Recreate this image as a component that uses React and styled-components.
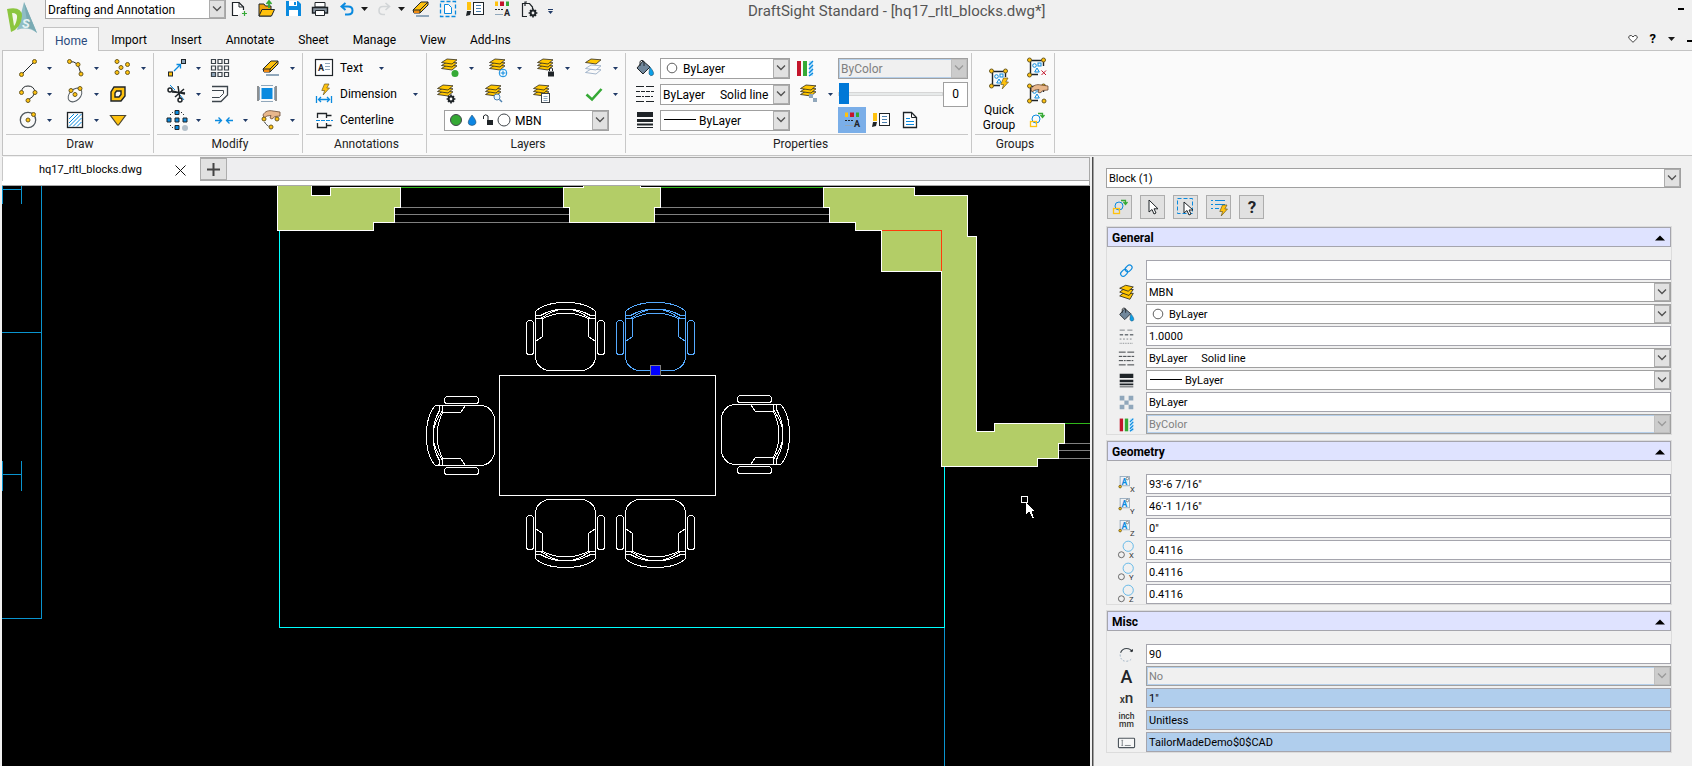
import React from 'react'
import styled, { createGlobalStyle } from 'styled-components'

const INK = '#1f2428'
const GOLD = '#ffc20e'
const BLUE = '#0a8adf'
const GREEN = '#35a935'
const RED = '#c3152b'
const SLATE = '#90a7bb'

const Dot = ({ x, y, r = 2 }) => (
  <circle cx={x} cy={y} r={r} fill={GOLD} stroke="#6b5a22" strokeWidth="1" />
)

const Bolt = ({ x, y }) => (
  <path
    transform={`translate(${x} ${y})`}
    d="M3.5 0H8L5.8 4H8.5L2.2 11L3.6 6.5H0.8Z"
    fill={GOLD}
    stroke="#6b5a22"
    strokeWidth=".7"
  />
)

const Slab = ({ y, fill = '#ffc600', stroke = '#2d2a20' }) => (
  <path d={`M1.5 ${y + 3.5}L7 ${y}L17 ${y + .8}L12 ${y + 5}Z`} fill={fill} stroke={stroke} strokeWidth=".8" />
)

const Slabs = () => (
  <>
    <Slab y={7} />
    <Slab y={4} />
    <Slab y={1} />
  </>
)

const Gear = ({ x, y }) => (
  <g transform={`translate(${x} ${y})`} stroke={INK} fill="none">
    <circle r="2.4" strokeWidth="2" />
    <path d="M0-4.4V-3M0 3V4.4M-4.4 0H-3M3 0H4.4M-3-3L-2-2M2 2L3 3M-3 3L-2 2M2-2L3-3" strokeWidth="1.6" />
  </g>
)

const Hand = ({ x, y }) => (
  <path
    transform={`translate(${x} ${y})`}
    d="M0 5C2 1 6 0 10 1L17 2V6L12 6.5L9 9L7 8L8 5.5L4 6L1 8Z"
    fill="#e8b78c"
    stroke="#6b4a33"
    strokeWidth=".8"
  />
)

const Page = ({ x, y, w, h }) => (
  <g transform={`translate(${x} ${y})`} fill="none">
    <rect x=".5" y=".5" width={w - 1} height={h - 1} fill="#fff" stroke="#3c444b" />
    <path d={`M2.5 3.5H${w - 2.5}M2.5 5.5H${w - 2.5}M2.5 7.5H${w - 2.5}`} stroke={SLATE} />
  </g>
)

const GroupFrame = () => (
  <g fill="none">
    <path d="M3.5 2.5H16.5V8M3.5 2.5V16.5H11" stroke={INK} strokeWidth="1.4" />
    <circle cx="7.5" cy="7.5" r="1.8" stroke={BLUE} />
    <rect x="11" y="5" width="3" height="3" stroke={BLUE} />
    <path d="M10 10L12.3 14H7.7Z" stroke={BLUE} />
    <Dot x={2.5} y={2} />
    <Dot x={16.5} y={2} />
    <Dot x={2.5} y={17} />
  </g>
)

const TagA = ({ axis }) => (
  <g>
    <rect x="2.5" y=".5" width="11" height="11" fill="#eef3f7" stroke={SLATE} />
    <text x="4" y="10" fontSize="10" fontWeight="700" fill={BLUE}>A</text>
    <circle cx="11" cy="3" r="1.5" fill="#fff" stroke="#555" strokeWidth=".8" />
    <Dot x={2.5} y={12.5} r={1.5} />
    <text x="14" y="19" fontSize="9" fill="#333">{axis}</text>
  </g>
)

const ScaleAxis = ({ axis }) => (
  <g fill="none">
    <circle cx="12" cy="5" r="6" stroke="#4fb0e6" />
    <circle cx="4" cy="15" r="3.5" stroke="#555" />
    <text x="13" y="19" fontSize="9" fill="#333">{axis}</text>
  </g>
)

const Attributes = () => (
  <g>
    <path d="M3 2.5H6V7H3Z" fill={GOLD} />
    <path d="M8 2.5H12V7H8Z" fill={RED} />
    <path d="M14 2.5H17V7H14Z" fill={GREEN} />
    <path d="M3 10.5H11" stroke={INK} strokeWidth="1" strokeDasharray="2 1" />
    <path d="M3 15.5H11" stroke={SLATE} />
    <text x="12" y="17" fontSize="9" fontWeight="700" fill={INK}>A</text>
  </g>
)

const ReplaceShape = () => (
  <g fill="none">
    <circle cx="9" cy="9" r="4" stroke={BLUE} />
    <rect x="3.5" y="11.5" width="6" height="5" stroke={GOLD} strokeWidth="1.3" />
    <path d="M11 3.5H15.5V6M13.5 5L15.5 7.5L17.5 5" stroke={GREEN} strokeWidth="1.3" />
  </g>
)

const Brush = () => (
  <g>
    <path d="M2 3H6V11H2Z" fill={GOLD} />
    <path d="M2 12H6L5 16L1 17Z" fill={INK} />
    <rect x="8.5" y="3.5" width="10" height="12" fill="#fff" stroke={INK} />
    <path d="M11 6.5H16M11 9.5H16M11 12.5H16" stroke="#4a7fae" />
  </g>
)

const Eraser = () => (
  <g>
    <path d="M5 17H18" stroke={SLATE} strokeWidth="2" />
    <path d="M2 11L10 3H17V6L9 14H3Z" fill={GOLD} stroke={INK} />
    <path d="M3 14V11.5H8.5V14Z" fill="#f08a12" />
    <path d="M2 11H9L17 3M9 11V14" fill="none" stroke={INK} />
  </g>
)

const Bucket = () => (
  <g>
    <path d="M8 3L15 9L8 16L2 10Z" fill="#71879b" stroke={INK} />
    <path d="M5 8V3.5Q7 1 9 3.5V8" fill="none" stroke={INK} />
    <path d="M15 9Q20 15 18 17Q15.500 19 14 16Q14 13 15 9Z" fill="#0aa0e8" stroke="#26506c" strokeWidth=".6" />
  </g>
)

const ColorBars = () => (
  <g>
    <path d="M2 3H6V18H2Z" fill={RED} />
    <path d="M8 3H12V18H8Z" fill={GREEN} />
    <path d="M14 3H18V18H14Z" fill="#bfe4fb" />
    <path d="M14 7L18 3M14 11L18 7M14 15L18 11M14 18L18 15" stroke={BLUE} strokeWidth="1.4" />
  </g>
)

const Weights = () => (
  <path d="M2 2H18V7H2ZM2 9H18V12H2ZM2 13.5H18V15.5H2ZM2 17H18V18H2Z" fill={INK} />
)

const drawings = {
  line: <><path d="M4 16L16 4" stroke={INK} /><Dot x={3.5} y={16.5} /><Dot x={16.5} y={3.5} /></>,
  polyline: <><path d="M4 3.5Q9 3 13 6.5L16 16" fill="none" stroke={INK} /><Dot x={4.5} y={3.5} /><Dot x={13} y={6.5} /><Dot x={16} y={16} /></>,
  points: <><Dot x={5} y={3.5} /><Dot x={15.5} y={6.5} /><Dot x={9} y={9.5} /><Dot x={5} y={14.5} /><Dot x={15.5} y={14.5} /></>,
  arc: <><path d="M3.5 8Q4 2 10 2T17 8Q16 13 10 16" fill="none" stroke={INK} /><Dot x={3.5} y={8.5} /><Dot x={17} y={8.5} /><Dot x={10} y={16.5} /></>,
  ellipse: <><ellipse cx="10" cy="11" rx="8" ry="5.5" transform="rotate(-45 10 11)" fill="none" stroke="#50585e" /><Dot x={10} y={10.5} /><Dot x={15} y={4.5} /><Dot x={6} y={6.5} /></>,
  region: <><path d="M6 3H17V12L13 17H3V8Z" fill={GOLD} stroke={INK} strokeWidth="1.4" /><path d="M8.5 7H13V10.5L11 13H7V9Z" fill="#fafafa" stroke={INK} strokeWidth="1.4" /></>,
  circle: <><circle cx="10" cy="10" r="7.7" fill="none" stroke="#50585e" strokeWidth="1.3" /><Dot x={10} y={10} /><Dot x={15.5} y={4.5} /></>,
  hatch: <><rect x="2.5" y="2.5" width="15" height="15" fill="#fff" stroke={INK} strokeWidth="1.3" /><path d="M4 9L9 4M4 13L13 4M4 16.5L16.5 4M8 16.5L16.5 8M12 16.5L16.5 12" stroke={BLUE} /></>,
  triangle: <path d="M2.5 5.5H17.5L10.5 15H9.5Z" fill={GOLD} stroke="#4d4630" strokeWidth="1.2" />,
  move: <><rect x="1.5" y="14" width="4" height="4" fill={GOLD} stroke={INK} /><rect x="14.5" y="1.5" width="4" height="4" fill={SLATE} stroke={INK} /><path d="M7 13L13 7M9.5 6.5H13.5V10.5" fill="none" stroke={BLUE} strokeWidth="1.3" /></>,
  pattern: (
    <g fill="none" stroke="#3c444b" strokeWidth="1.2">
      <path d="M1.5 1.5H5.5V5.5H1.5ZM8 1.5H12V5.5H8ZM14.5 1.5H18.5V5.5H14.5ZM1.5 8H5.5V12H1.5ZM8 8H12V12H8ZM14.5 8H18.5V12H14.5ZM8 14.5H12V18.5H8ZM14.5 14.5H18.5V18.5H14.5Z" />
      <path d="M1.5 14.5H5.5V18.5H1.5Z" fill={SLATE} />
    </g>
  ),
  eraser: <Eraser />,
  trim: (
    <g fill="none" stroke={INK} strokeWidth="1.5">
      <path d="M3 1L8 6M13 11L17 16" stroke={BLUE} strokeWidth="1" />
      <path d="M5 7L18 10M5 8L18 9M11 2L13 15M17 5L8 13" />
      <circle cx="3" cy="6" r="2" /><circle cx="13" cy="16" r="2" />
    </g>
  ),
  offset: <g fill="none" stroke="#3c444b"><path d="M2 2.5H17.5V11L11 17.5H2" strokeWidth="1.3" /><path d="M2 6.5H13.5V9.5L9.5 13.5H2" /></g>,
  stretch: <><rect x="4.5" y="4" width="11" height="11" fill={BLUE} /><path d="M4 1.5H16M4 17.5H16M2.5 3V16M17.5 3V16" stroke={SLATE} /><path d="M1 2V17M19 2V17" stroke={INK} /></>,
  ring: (
    <g stroke={INK}>
      <path d="M3 5L6 2M14 2L17 5M3 15L6 18" strokeDasharray="1.5 1.5" />
      <path d="M8 .5H12V4.5H8ZM0 8H4V12H0ZM8 8H12V12H8ZM16 8H20V12H16ZM8 15.5H12V19.5H8Z" fill={BLUE} />
      <circle cx="18" cy="18" r="3" fill="#b4c0ca" stroke="none" />
    </g>
  ),
  join: <path d="M1 10.5H7M4.5 7.5L7.5 10.5L4.5 13.5M19 10.5H13M15.5 7.5L12.5 10.5L15.5 13.5" fill="none" stroke={BLUE} strokeWidth="1.3" />,
  editPoly: <><path d="M3 9Q3 14 9 17" stroke={INK} fill="none" strokeDasharray="2 1" /><Hand x={2} y={0} /><Dot x={3} y={9} /><Dot x={16} y={9} /><Dot x={10} y={17} /></>,
  note: <><rect x="1.5" y="1.5" width="17" height="16" fill="#fff" stroke={INK} strokeWidth="1.2" /><text x="4" y="13" fontSize="9" fontWeight="700" fill={INK}>A</text><path d="M11 5.5H16M11 8.5H16M11 11.5H16" stroke={SLATE} /></>,
  dimension: <><Bolt x={7} y={0} /><path d="M2.5 12V19M17.5 12V19M4.5 15.5H15.5M7 13L4.5 15.5L7 18M13 13L15.5 15.5L13 18" fill="none" stroke={BLUE} strokeWidth="1.3" /></>,
  centerline: <><path d="M3.5 8V3.5H12.5V8M12.5 5.5H17.5M3.5 13V17.5H12.5V13M12.5 15.5H17.5" fill="none" stroke={INK} strokeWidth="1.3" /><path d="M2 10.5H19" stroke={BLUE} strokeDasharray="4 1" /></>,
  layerOn: <><Slabs /><circle cx="15" cy="15.5" r="3.5" fill={GREEN} /></>,
  layerNew: <><Slabs /><circle cx="15" cy="15" r="3.8" fill="#fff" stroke={BLUE} /><path d="M15 12.5V17.5M12.5 15H17.5" stroke={BLUE} /></>,
  layerLock: <><Slabs /><path d="M12 13.5H18V18.5H12Z" fill={INK} /><path d="M13.5 13V10.5Q15 9 16.5 10.5V13" fill="none" stroke={INK} /></>,
  layerPrev: <><Slab y={11} fill="#fafafa" stroke="#8fa6c0" /><Slab y={7} fill="#fafafa" stroke="#8fa6c0" /><Slab y={1} /></>,
  layerGear: <><Slabs /><Gear x={15} y={15} /></>,
  layerFind: <><Slabs /><circle cx="13" cy="13" r="3" fill="#e8f5fd" stroke="#4a7fae" /><path d="M15.5 15.5L18 18" stroke="#4a7fae" strokeWidth="1.4" /></>,
  layerList: <><Slabs /><Page x={9} y={9} w={9} h={10} /></>,
  check: <path d="M2.5 10.5L8 15.5L17.5 5" fill="none" stroke={GREEN} strokeWidth="2.6" />,
  layers: <g stroke="#2d2a20" fill="#ffc600"><path d="M2 14L6 11H18L14 18Z" /><path d="M2 9.5L6 6.5H18L13 13.5Z" /><path d="M2 5L9 1.5L18 3.5L12 8.5Z" /></g>,
  layerAlpha: <><Slabs /><path d="M10 10H14V14H10ZM14 14H18V18H14Z" fill={SLATE} /></>,
  bucket: <Bucket />,
  styles: <g fill="none" stroke={INK}><path d="M1 2.5H9M11 2.5H19M1 17.5H9M11 17.5H19" /><path d="M1 7.5H19" strokeDasharray="4 1" /><path d="M1 12.5H19" strokeDasharray="5 1 2 1" /></g>,
  weights: <Weights />,
  bars: <ColorBars />,
  attributes: <Attributes />,
  brush: <Brush />,
  page: <><path d="M3.5 2.5H11.5L16.5 7.5V17.5H3.5Z" fill="#fff" stroke={INK} strokeWidth="1.3" /><path d="M11.5 2.5V7.5H16.5" fill="none" stroke={INK} /><path d="M6 8.5H10M6 11.5H14M6 14.5H14" stroke={BLUE} /></>,
  quickGroup: <><GroupFrame /><Bolt x={11} y={9} /></>,
  ungroup: <><GroupFrame /><path d="M14.5 12.5L19 17M19 12.5L14.5 17" stroke={RED} /></>,
  editGroup: <><GroupFrame /><Hand x={4} y={0} /><Dot x={17} y={17} /></>,
  replace: <ReplaceShape />,
  newFile: <><path d="M9 16.5H3.5V3.5H10L14.5 8V11" fill="#fff" stroke={INK} strokeWidth="1.2" /><path d="M10 3.5V8H14.5" fill="none" stroke={INK} /><path d="M15.5 12V17M13 14.5H18" stroke={GREEN} strokeWidth="1.2" /></>,
  open: <><path d="M3 5H8L9.5 7H15V17H3Z" fill="#f0a30a" stroke={INK} /><path d="M3 17L6 10.5H18.5L15.5 17Z" fill={GOLD} stroke={INK} /><path d="M13 9V3M10.5 5L13 2L15.5 5" stroke={GREEN} strokeWidth="1.8" fill="none" /></>,
  save: <><path d="M3 2H15L18 5V17H3Z" fill={BLUE} /><path d="M6 2H14V7H6ZM6 11H15V17H6Z" fill="#fff" /><path d="M11 3H13V6H11Z" fill={BLUE} /></>,
  print: <><path d="M5 3.5H15V8H5Z" fill="#fff" stroke={INK} /><path d="M2.5 8.5H17.5V14H2.5Z" fill="#8b97a2" stroke={INK} strokeWidth="1.4" /><path d="M5.5 11.5H14.5V16.5H5.5Z" fill="#fff" stroke={INK} /></>,
  undo: <path d="M8.5 4L4.5 7.5L8.5 11M5 7.5H11Q15.5 7.5 15.5 11.5T11 15.5H8" fill="none" stroke={BLUE} strokeWidth="2" />,
  redo: <path d="M11.5 4L15.5 7.5L11.5 11M15 7.5H9Q5 7.5 5 11.5T9 15.5H11" fill="none" stroke="#d2d5d7" strokeWidth="1.6" />,
  pickPage: <><rect x="2.5" y="2.5" width="15" height="15" fill="none" stroke={BLUE} strokeWidth="1.3" strokeDasharray="4 2" /><path d="M6.5 5.5H10.5L13.5 8.5V14.5H6.5Z" fill="#fff" stroke={BLUE} /></>,
  pageGear: <><path d="M8 17.5H3.5V4.5H10.5L13.5 8V10M6 7V3H8" fill="none" stroke={INK} strokeWidth="1.2" /><Gear x={14} y={14} /></>,
  link: <g fill="none" stroke={BLUE} strokeWidth="1.3" transform="rotate(-45 10 10)"><rect x="1.5" y="7" width="9" height="6" rx="3" /><rect x="9" y="7" width="9" height="6" rx="3" /></g>,
  scaleLines: <g stroke="#70767b"><path d="M2 2.5H18" strokeDasharray="6 3" /><path d="M2 8H18" strokeDasharray="4 2" strokeWidth="1.6" /><path d="M2 13H18" strokeDasharray="2 2" /><path d="M2 18H18" strokeDasharray="1 1" /></g>,
  checker: <path d="M2 2H7.5V7.5H2ZM12.5 2H18V7.5H12.5ZM7.5 7.5H12.5V12.5H7.5ZM2 12.5H7.5V18H2ZM12.5 12.5H18V18H12.5Z" fill={SLATE} />,
  rotate: <g fill="none"><path d="M3 8Q5 3 10 3T16.5 7" stroke="#3c444b" strokeWidth="1.3" /><path d="M13.5 6.5H17.5V3.5Z" fill={INK} /><path d="M2.5 10Q3 18 10 18Q14 17.5 16 15" stroke={SLATE} strokeDasharray="2 2" /></g>,
  letterA: <text x="10" y="18" fontSize="21" fontWeight="500" textAnchor="middle" fill={INK}>A</text>,
  xn: <text x="10" y="15" fontWeight="500" textAnchor="middle" fill="#333"><tspan fontSize="12">x</tspan><tspan fontSize="18">n</tspan></text>,
  units: <><text x="10" y="8" fontSize="10" fontWeight="500" textAnchor="middle" fill="#333">inch</text><text x="10" y="18" fontSize="10" fontWeight="500" textAnchor="middle" fill="#333">mm</text></>,
  nameBox: <><rect x=".5" y="5" width="19" height="11" rx="1" fill="#f7f7f7" stroke="#4c545b" strokeWidth="1.3" /><path d="M5 8V13M4 7.5H6M4 13.5H6M8 13.5H15" stroke="#70767b" /></>,
  pointer: <path d="M6 3V15L9 12.5L11 17L13 16L11 11.8H15Z" fill="#fff" stroke={INK} />,
  pointerBox: <><rect x="1.5" y="1.5" width="15" height="15" fill="none" stroke={BLUE} strokeDasharray="4 2" /><path d="M8 5V16L11 13.5L13 18L15 17L13 13H17Z" fill="#fff" stroke={INK} /></>,
  quickList: <><path d="M2 3.5H4M6 3.5H16M2 7.5H4M6 7.5H16M2 11.5H4M6 11.5H10" stroke={BLUE} strokeWidth="1.2" /><Bolt x={10} y={8} /></>,
  help: <text x="10" y="16" fontSize="17" fontWeight="700" textAnchor="middle" fill={INK}>?</text>,
  posX: <TagA axis="X" />,
  posY: <TagA axis="Y" />,
  posZ: <TagA axis="Z" />,
  scaleX: <ScaleAxis axis="X" />,
  scaleY: <ScaleAxis axis="Y" />,
  scaleZ: <ScaleAxis axis="Z" />,
}

const Icon = ({ name }) => (
  <IconSvg viewBox="0 0 20 20" aria-hidden="true">{drawings[name]}</IconSvg>
)

const Caret = ({ dark }) => (
  <CaretSvg viewBox="0 0 7 4" aria-hidden="true" $dark={dark}>
    <path d="M0 0H7L3.5 4Z" fill={dark ? '#1a1a1a' : '#203a66'} />
  </CaretSvg>
)

const Tool = ({ icon, menu }) => (
  <ToolButton type="button" aria-label={icon}>
    <ToolFace $menu={menu}><Icon name={icon} /></ToolFace>
    {menu && <Caret />}
  </ToolButton>
)

const Chevron = ({ disabled }) => (
  <ComboArrow $disabled={disabled}>
    <svg width="10" height="6" viewBox="0 0 10 6" aria-hidden="true">
      <path d="M1 .5L5 4.5L9 .5" fill="none" stroke={disabled ? '#9a9a9a' : '#505050'} strokeWidth="1.3" />
    </svg>
  </ComboArrow>
)

const Combo = ({ label, value, lead, disabled, small }) => (
  <ComboBox $disabled={disabled} $small={small}>
    {lead}
    <ComboSelect aria-label={label} disabled={disabled} defaultValue={value}>
      <option>{value}</option>
    </ComboSelect>
    <Chevron disabled={disabled} />
  </ComboBox>
)

const tabs = ['Home', 'Import', 'Insert', 'Annotate', 'Sheet', 'Manage', 'View', 'Add-Ins']

const drawTools = [
  ['line', true], ['polyline', true], ['points', true],
  ['arc', true], ['ellipse', true], ['region', false],
  ['circle', true], ['hatch', true], ['triangle', false],
]

const modifyTools = [
  ['move', true], ['pattern', false], ['eraser', true],
  ['trim', true], ['offset', false], ['stretch', false],
  ['ring', true], ['join', true], ['editPoly', true],
]

const layerTools = [
  ['layerOn', true], ['layerNew', true], ['layerLock', true], ['layerPrev', true],
  ['layerGear', false], ['layerFind', false], ['layerList', false], ['check', true],
]

const Swatch = () => (
  <Lead $width={18}>
    <svg width="12" height="12" viewBox="0 0 12 12"><circle cx="6" cy="6" r="4.8" fill="#fff" stroke="#606060" /></svg>
  </Lead>
)

const Stroke = () => (
  <Lead $width={34}>
    <svg width="32" height="2" viewBox="0 0 32 2"><path d="M0 .5H32" stroke="#000" /></svg>
  </Lead>
)

const LayerState = () => (
  <svg width="68" height="16" viewBox="-2 0 68 16" aria-hidden="true">
    <circle cx="9" cy="8" r="5.5" fill={GREEN} stroke="#40464b" />
    <path d="M25 3Q31 10 28 12.5Q25 14.5 22 12.5Q19.5 10 25 3Z" fill="#0d86e3" stroke="#28506e" strokeWidth=".6" />
    <path d="M40 8H46V13H40Z" fill={INK} /><path d="M36.5 7V4Q38.5 1.5 41 4V8" fill="none" stroke={INK} />
    <circle cx="57" cy="8" r="6" fill="#fff" stroke="#40464b" />
  </svg>
)

const general = [
  { icon: 'link', label: 'Hyperlink', value: '' },
  { icon: 'layers', label: 'Layer', value: 'MBN', combo: true },
  { icon: 'bucket', label: 'Color', value: 'ByLayer', combo: true, lead: <Swatch /> },
  { icon: 'scaleLines', label: 'Line scale', value: '1.0000' },
  { icon: 'styles', label: 'Line style', value: 'ByLayer\u00a0\u00a0\u00a0\u00a0\u00a0Solid line', combo: true },
  { icon: 'weights', label: 'Line weight', value: 'ByLayer', combo: true, lead: <Stroke /> },
  { icon: 'checker', label: 'Transparency', value: 'ByLayer' },
  { icon: 'bars', label: 'Print style', value: 'ByColor', combo: true, disabled: true },
]

const geometry = [
  { icon: 'posX', label: 'Position X', value: '93\'-6 7/16"' },
  { icon: 'posY', label: 'Position Y', value: '46\'-1 1/16"' },
  { icon: 'posZ', label: 'Position Z', value: '0"' },
  { icon: 'scaleX', label: 'Scale X', value: '0.4116' },
  { icon: 'scaleY', label: 'Scale Y', value: '0.4116' },
  { icon: 'scaleZ', label: 'Scale Z', value: '0.4116' },
]

const misc = [
  { icon: 'rotate', label: 'Rotation', value: '90' },
  { icon: 'letterA', label: 'Annotative', value: 'No', combo: true, disabled: true },
  { icon: 'xn', label: 'Unit factor', value: '1"', locked: true },
  { icon: 'units', label: 'Block unit', value: 'Unitless', locked: true },
  { icon: 'nameBox', label: 'Name', value: 'TailorMadeDemo$0$CAD', locked: true },
]

const Section = ({ title, rows }) => (
  <SectionBox>
    <SectionHead type="button">
      {title}
      <svg width="10" height="6" viewBox="0 0 10 6" aria-hidden="true"><path d="M0 5.5L5 .5L10 5.5Z" fill="#000" /></svg>
    </SectionHead>
    <SectionRows>
      {rows.map((row) => (
        <PropertyRow key={row.label}>
          <PropertyIcon><Icon name={row.icon} /></PropertyIcon>
          {row.combo
            ? <Combo small label={row.label} value={row.value} lead={row.lead} disabled={row.disabled} />
            : <PropertyInput aria-label={row.label} defaultValue={row.value} readOnly={row.locked} $locked={row.locked} />}
        </PropertyRow>
      ))}
    </SectionRows>
  </SectionBox>
)

// A chair seen from above, its back at the origin and its seat towards +y.
const Chair = ({ place, color = '#fff' }) => (
  <g transform={place} stroke={color} fill="none">
    <path d="M-30 9C-23 2 -10 0 0 0S23 2 30 9V54C30 62 25 66 18 68H-18C-25 66 -30 62 -30 54Z" />
    <path d="M-30 12Q-28 14 -25 13Q-14 7 -5 7H5Q14 7 25 13Q28 14 30 12" />
    <path d="M-30 16H-26Q-24 16 -20 13Q-12 8 -5 7M30 16H26Q24 16 20 13Q12 8 5 7" />
    <path d="M-23 16Q-12 11 -5 11H5Q12 11 23 16" />
    <path d="M-30 16H-23V34L-30 39M30 16H23V34L30 39" />
    <rect x="-39" y="18" width="7" height="34" rx="3" />
    <rect x="32" y="18" width="7" height="34" rx="3" />
  </g>
)

const FloorPlan = () => (
  <Plan shapeRendering="crispEdges" role="img" aria-label="hq17_rltl_blocks.dwg">
    <g transform="translate(-2 -186)" fill="none">
      <path d="M2.5 186V204M21.5 186V204M2 189.5H21.5M2.5 461V491M21.5 461V491M2 474.5H21.5M41.5 186V618.5H2M2 332.5H41.5M944.5 628V2000" stroke="#0a94cf" />
      <path d="M279.5 231V627.5H944.5V467" stroke="#00ffff" />
      <path d="M400 187.5H564M660 187.5H824M1065 423.5H1600" stroke="#2fb81a" />
      <path d="M400 207.5H564M395 214.5H570M395 222.5H570M660 207.5H824M655 214.5H830M655 222.5H830M1065 443.5H1600M1059 450.5H1600M1059 458.5H1600" stroke="#808080" />
      <g fill="#b3cd67" stroke="#fff">
        <path d="M277.5 180V230.5H373.5V222.5H394.5V207.5H400.5V187.5H330.5V195.5H311.5V180" />
        <path d="M583.5 180V187.5H563.5V207.5H569.5V222.5H654.5V207.5H660.5V187.5H640.5V180" />
        <path d="M823.5 187.5H914.5V195.5H967.5V236.5H976.5V431.5H994.5V423.5H1064.5V443.5H1058.5V458.5H1037.5V466.5H941.5V271.5H881.5V230.5H855.5V222.5H829.5V207.5H823.5Z" />
      </g>
      <path d="M882 230.5H941.5V271" stroke="#ff3b0a" />
      <rect x="499.5" y="375.5" width="216" height="120" stroke="#fff" />
      <Chair place="translate(565.5 302.5)" />
      <Chair place="translate(655.5 302.5)" color="#55aaff" />
      <Chair place="translate(565.5 567.5) scale(1 -1)" />
      <Chair place="translate(655.5 567.5) scale(1 -1)" />
      <Chair place="translate(426.5 435.5) rotate(-90)" />
      <Chair place="translate(789.5 434.5) rotate(90)" />
      <rect x="650.5" y="365.5" width="10" height="10" fill="#0000ff" stroke="#808080" />
      <rect x="1021.5" y="496.5" width="6" height="6" stroke="#fff" />
      <path d="M1026 502V514L1029 511.5L1032.5 518H1034L1031.5 511H1034.5Z" fill="#fff" />
    </g>
  </Plan>
)

export default function App() {
  return (
    <>
      <GlobalStyle />
      <Shell>
        <Header>
          <Logo viewBox="0 0 43 36" aria-hidden="true">
            <path d="M24 2L37 33Q28 26 17 30Z" fill="#8fbdc4" />
            <path d="M24 2L37 33Q32 28 28 28Z" fill="#79aab3" />
            <path d="M7 9Q22 6 22 16Q21 28 11 32Z" fill="#8cc63f" />
            <path d="M12 13Q18 13 17 18Q16 24 14 26Z" fill="#f4f8ea" />
            <text x="22" y="28" fontSize="13" fontWeight="700" fontStyle="italic" fill="#e6f2f3">S</text>
          </Logo>
          <HeaderRows>
            <TitleRow>
              <Workspace>
                <ComboSelect aria-label="Workspace" defaultValue="Drafting and Annotation">
                  <option>Drafting and Annotation</option>
                </ComboSelect>
                <Chevron />
              </Workspace>
              <QuickBar>
                <QuickButton type="button" aria-label="New"><Icon name="newFile" /></QuickButton>
                <QuickButton type="button" aria-label="Open"><Icon name="open" /></QuickButton>
                <QuickButton type="button" aria-label="Save"><Icon name="save" /></QuickButton>
                <QuickButton type="button" aria-label="Print"><Icon name="print" /></QuickButton>
                <QuickButton type="button" aria-label="Undo" $menu><Icon name="undo" /><Caret dark /></QuickButton>
                <QuickButton type="button" aria-label="Redo" $menu><Icon name="redo" /><Caret dark /></QuickButton>
                <QuickButton type="button" aria-label="Delete"><Icon name="eraser" /></QuickButton>
                <QuickButton type="button" aria-label="Select page"><Icon name="pickPage" /></QuickButton>
                <QuickButton type="button" aria-label="Match"><Icon name="brush" /></QuickButton>
                <QuickButton type="button" aria-label="Properties"><Icon name="attributes" /></QuickButton>
                <QuickButton type="button" aria-label="Options"><Icon name="pageGear" /></QuickButton>
                <MoreButton type="button" aria-label="More"><Caret /></MoreButton>
              </QuickBar>
              <Title>DraftSight Standard - [hq17_rltl_blocks.dwg*]</Title>
              <Minimize type="button" aria-label="Minimize" />
            </TitleRow>
            <TabRow>
              {tabs.map((tab) => (
                <RibbonTab key={tab} type="button" $active={tab === 'Home'}>{tab}</RibbonTab>
              ))}
              <HelpTools>
                <PlainButton type="button" aria-label="Favourites">
                  <svg width="10" height="8" viewBox="0 0 10 8"><path d="M5 7.3L.8 3.2V1.5L2 .6H3.6L5 2L6.4 .6H8L9.2 1.5V3.2Z" fill="#fff" stroke="#444" /></svg>
                </PlainButton>
                <HelpButton type="button">?</HelpButton>
                <PlainButton type="button" aria-label="Help menu"><Caret dark /></PlainButton>
                <Minimize type="button" aria-label="Minimize drawing" $edge />
              </HelpTools>
            </TabRow>
          </HeaderRows>
        </Header>

        <Ribbon>
          <Group $width={151} $inset={11}>
            <ToolGrid $columns={3} $step={47}>
              {drawTools.map(([icon, menu]) => <Tool key={icon} icon={icon} menu={menu} />)}
            </ToolGrid>
            <GroupName>Draw</GroupName>
          </Group>
          <Group $width={149} $inset={9}>
            <ToolGrid $columns={3} $step={47}>
              {modifyTools.map(([icon, menu]) => <Tool key={icon} icon={icon} menu={menu} />)}
            </ToolGrid>
            <GroupName>Modify</GroupName>
          </Group>
          <Group $width={124} $inset={11}>
            <ToolGrid $columns={1} $step={108}>
              <TextTool type="button"><Icon name="note" />Text<MenuMark><Caret /></MenuMark></TextTool>
              <TextTool type="button"><Icon name="dimension" />Dimension<MenuMark><Caret /></MenuMark></TextTool>
              <TextTool type="button"><Icon name="centerline" />Centerline</TextTool>
            </ToolGrid>
            <GroupName>Annotations</GroupName>
          </Group>
          <Group $width={199} $inset={9}>
            <ToolGrid $columns={4} $step={48}>
              {layerTools.map(([icon, menu]) => <Tool key={icon} icon={icon} menu={menu} />)}
              <LayerSlot>
                <Combo label="Active layer" value="MBN" lead={<LayerState />} />
              </LayerSlot>
            </ToolGrid>
            <GroupName>Layers</GroupName>
          </Group>
          <Group $width={346} $inset={9}>
            <PropertyGrid>
              <Icon name="bucket" />
              <Combo label="Line color" value="ByLayer" lead={<Swatch />} />
              <Tool icon="bars" />
              <Combo label="Print style" value="ByColor" disabled />

              <Icon name="styles" />
              <Combo label="Line style" value={'ByLayer\u00a0\u00a0\u00a0\u00a0\u00a0Solid line'} />
              <Tool icon="layerAlpha" menu />
              <Opacity>
                <Slider type="range" min="0" max="90" defaultValue="0" aria-label="Transparency" />
                <OpacityValue defaultValue="0" aria-label="Transparency value" />
              </Opacity>

              <Icon name="weights" />
              <Combo label="Line weight" value="ByLayer" lead={<Stroke />} />
              <span />
              <Toggles>
                <Toggle type="button" aria-label="Attributes" $on><Icon name="attributes" /></Toggle>
                <Toggle type="button" aria-label="Property painter"><Icon name="brush" /></Toggle>
                <Toggle type="button" aria-label="Properties"><Icon name="page" /></Toggle>
              </Toggles>
            </PropertyGrid>
            <GroupName>Properties</GroupName>
          </Group>
          <Group $width={83} $inset={3}>
            <GroupTools>
              <QuickGroup type="button">
                <Icon name="quickGroup" />
                <span>Quick<br />Group</span>
              </QuickGroup>
              <ToolGrid $columns={1} $step={24}>
                <Tool icon="ungroup" />
                <Tool icon="editGroup" />
                <Tool icon="replace" />
              </ToolGrid>
            </GroupTools>
            <GroupName>Groups</GroupName>
          </Group>
        </Ribbon>

        <Main>
          <Documents>
            <DocTabs>
              <DocTab>
                <DocName>hq17_rltl_blocks.dwg</DocName>
                <PlainButton type="button" aria-label="Close">
                  <svg width="11" height="11" viewBox="0 0 11 11"><path d="M.5 .5L10.5 10.5M10.5 .5L.5 10.5" stroke="#111" /></svg>
                </PlainButton>
              </DocTab>
              <DocStrip>
                <NewTab type="button" aria-label="New tab">
                  <svg width="13" height="13" viewBox="0 0 13 13"><path d="M6.5 0V13M0 6.5H13" stroke="#444" strokeWidth="2" /></svg>
                </NewTab>
              </DocStrip>
            </DocTabs>
            <Canvas><FloorPlan /></Canvas>
          </Documents>

          <Panel>
            <Combo small label="Selection" value="Block (1)" />
            <PanelTools>
              {['replace', 'pointer', 'pointerBox', 'quickList', 'help'].map((icon) => (
                <PanelButton key={icon} type="button" aria-label={icon}><Icon name={icon} /></PanelButton>
              ))}
            </PanelTools>
            <Sections>
              <Section title="General" rows={general} />
              <Section title="Geometry" rows={geometry} />
              <Section title="Misc" rows={misc} />
            </Sections>
          </Panel>
        </Main>
      </Shell>
    </>
  )
}

const GlobalStyle = createGlobalStyle`
    * {
        box-sizing: border-box;
    }
    body {
        margin: 0;
        background: #f0f0f0;
        color: #000;
        font: 12px/16px Roboto, "Noto Sans", sans-serif;
    }
    button, input, select {
        margin: 0;
        padding: 0;
        border: 0;
        border-radius: 0;
        background: none;
        color: inherit;
        font: inherit;
    }
`

const Shell = styled.div`
    display: flex;
    flex-direction: column;
    min-height: 100vh;
`

const IconSvg = styled.svg`
    flex: none;
    width: 20px;
    height: 20px;
    overflow: visible;
`

const CaretSvg = styled.svg`
    flex: none;
    width: ${(p) => (p.$dark ? '7px' : '5px')};
    height: ${(p) => (p.$dark ? '4px' : '3px')};
`

const Header = styled.header`
    display: flex;
    height: 50px;
`

const Logo = styled.svg`
    flex: none;
    width: 43px;
    height: 36px;
`

const HeaderRows = styled.div`
    display: flex;
    flex: 1;
    flex-direction: column;
    min-width: 0;
`

const TitleRow = styled.div`
    display: flex;
    align-items: flex-start;
    height: 27px;
    padding: 0 8px 0 2px;
`

const Workspace = styled.div`
    display: flex;
    width: 181px;
    height: 19px;
    background: #fff;
    border: 1px solid #a5a5a5;
    border-top: 0;
`

const QuickBar = styled.div`
    display: flex;
    align-items: center;
    height: 18px;
    padding-left: 1px;
`

const QuickButton = styled.button`
    display: flex;
    align-items: center;
    gap: 4px;
    width: ${(p) => (p.$menu ? '37px' : '27px')};
    padding-left: 2px;
    height: 18px;
`

const MoreButton = styled.button`
    display: flex;
    align-items: center;
    width: 14px;
    height: 18px;
    padding: 4px 4px 0;

    svg {
        border-top: 1px solid #203a66;
        box-sizing: content-box;
        padding-top: 1px;
    }
`

const Title = styled.h1`
    flex: 1;
    margin: 0;
    padding-left: 190px;
    color: #555;
    font-size: 15px;
    font-weight: 400;
    line-height: 23px;
    white-space: nowrap;
`

const Minimize = styled.button`
    width: ${(p) => (p.$edge ? '5px' : '6px')};
    height: 2px;
    margin-top: ${(p) => (p.$edge ? '4px' : '8px')};
    background: #000;
`

const TabRow = styled.nav`
    display: flex;
    align-items: flex-end;
    height: 23px;
`

const RibbonTab = styled.button`
    position: relative;
    height: ${(p) => (p.$active ? '24px' : '23px')};
    margin-bottom: ${(p) => (p.$active ? '-1px' : '0')};
    padding: 2px 11px 0;
    background: ${(p) => (p.$active ? '#fafafa' : 'transparent')};
    border: 1px solid ${(p) => (p.$active ? '#c3c3c3' : 'transparent')};
    border-bottom: 0;
    color: ${(p) => (p.$active ? '#2b4a7d' : '#000')};
`

const HelpTools = styled.div`
    display: flex;
    align-items: center;
    gap: 12px;
    height: 23px;
    margin-left: auto;
`

const PlainButton = styled.button`
    display: flex;
`

const HelpButton = styled.button`
    font-weight: 700;
    font-size: 13px;
`

const Ribbon = styled.div`
    display: flex;
    height: 106px;
    margin-left: 2px;
    background: #fafafa;
    border: 1px solid #c3c3c3;
    border-right: 0;
`

const Group = styled.section`
    display: flex;
    flex-direction: column;
    width: ${(p) => p.$width}px;
    margin: 2px 0;
    padding-top: 2px;
    border-right: 1px solid #c8c8c8;

    > :first-child {
        padding-left: ${(p) => p.$inset}px;
    }
`

const GroupName = styled.h2`
    margin: auto 3px 0;
    padding-left: 4px;
    border-top: 1px solid #c8c8c8;
    color: #222;
    font-size: 12px;
    font-weight: 400;
    line-height: 18px;
    text-align: center;
`

const ToolGrid = styled.div`
    display: grid;
    grid-template-columns: repeat(${(p) => p.$columns}, ${(p) => p.$step}px);
    grid-auto-rows: 26px;
`

const ToolButton = styled.button`
    display: flex;
    align-items: center;
    gap: 5px;
`

const ToolFace = styled.span`
    display: flex;
    justify-content: center;
    width: ${(p) => (p.$menu ? '28px' : '20px')};
`

const TextTool = styled.button`
    display: flex;
    align-items: center;
    gap: 6px;
    text-align: left;
`

const MenuMark = styled.span`
    display: flex;
    padding-left: 10px;
`

const LayerSlot = styled.div`
    display: flex;
    align-items: center;
    grid-column: 1 / -1;
    width: 173px;
    padding-left: 8px;
`

const ComboBox = styled.div`
    display: flex;
    align-items: center;
    width: 100%;
    height: ${(p) => (p.$small ? '20px' : '21px')};
    background: ${(p) => (p.$disabled ? '#f0f0f0' : '#fff')};
    border: 1px solid #a0a0a0;
    box-shadow: ${(p) => (p.$disabled ? 'inset 0 0 0 1px #b5cfea' : 'none')};
    color: ${(p) => (p.$disabled ? '#808080' : '#000')};
    font-size: ${(p) => (p.$small ? '11px' : '12px')};
`

const ComboSelect = styled.select`
    flex: 1;
    min-width: 0;
    height: 100%;
    padding: 2px 0 0 2px;
    appearance: none;
    outline: 0;

    &:disabled {
        opacity: 1;
    }
`

const ComboArrow = styled.span`
    display: flex;
    flex: none;
    align-items: center;
    justify-content: center;
    width: 16px;
    height: 100%;
    background: ${(p) => (p.$disabled ? '#cccccc' : '#e1e1e1')};
    border: 1px solid ${(p) => (p.$disabled ? '#bfbfbf' : '#adadad')};
`

const Lead = styled.span`
    display: flex;
    justify-content: center;
    width: ${(p) => p.$width}px;
    margin-left: 2px;
`

const PropertyGrid = styled.div`
    display: grid;
    grid-template-columns: 20px 130px 38px 130px;
    grid-template-rows: repeat(3, 26px);
    align-items: center;
    column-gap: 5px;
`

const Opacity = styled.div`
    display: flex;
    align-items: center;
`

const Slider = styled.input`
    flex: 1;
    min-width: 0;
    height: 21px;
    appearance: none;

    &::-webkit-slider-runnable-track {
        height: 4px;
        background: #e7eaea;
        border: 1px solid #d6d6d6;
    }

    &::-webkit-slider-thumb {
        width: 10px;
        height: 21px;
        margin-top: -10px;
        appearance: none;
        background: #0078d7;
    }
`

const OpacityValue = styled.input`
    width: 25px;
    height: 25px;
    background: #fff;
    border: 1px solid #a0a0a0;
    text-align: center;
`

const Toggles = styled.div`
    display: flex;
    gap: 1px;
`

const Toggle = styled.button`
    display: flex;
    align-items: center;
    justify-content: center;
    width: 28px;
    height: 26px;
    background: ${(p) => (p.$on ? '#7aaee8' : 'transparent')};
`

const GroupTools = styled.div`
    display: flex;
    gap: 4px;
`

const QuickGroup = styled.button`
    display: flex;
    flex-direction: column;
    align-items: center;
    gap: 14px;
    width: 48px;
    height: 78px;
    padding-top: 14px;
    line-height: 15px;
`

const Main = styled.main`
    display: grid;
    grid-template-columns: minmax(0, 1fr) 600px;
    flex: 1;
    padding-top: 1px;
`

const Documents = styled.div`
    display: flex;
    flex-direction: column;
    padding: 0 2px;
`

const DocTabs = styled.div`
    display: flex;
    height: 29px;
    padding-bottom: 4px;
    background: #fff;
    border: 1px solid #a8a8a8;
    border-width: 0 1px 1px 0;
`

const DocTab = styled.div`
    display: flex;
    align-items: center;
    width: 198px;
    padding: 2px 14px 0 36px;
    border-left: 1px solid #c8c8c8;
    font-size: 11px;
`

const DocName = styled.span`
    flex: 1;
`

const DocStrip = styled.div`
    flex: 1;
    background: #eeeef0;
    border: 1px solid #a8a8a8;
    border-width: 1px 0;
`

const NewTab = styled.button`
    display: flex;
    align-items: center;
    justify-content: center;
    width: 27px;
    height: 22px;
    background: #e1e1e1;
    border: 1px solid #adadad;
`

const Canvas = styled.div`
    flex: 1;
    min-height: 580px;
    background: #000;
`

const Plan = styled.svg`
    display: block;
    width: 100%;
    height: 100%;
`

const Panel = styled.aside`
    padding: 11px 11px 14px 12px;
    border-left: 2px groove #a0a0a0;
`

const PanelTools = styled.div`
    display: flex;
    gap: 8px;
    padding: 7px 0 7px 1px;
`

const PanelButton = styled.button`
    display: flex;
    align-items: center;
    justify-content: center;
    width: 25px;
    height: 24px;
    background: #e1e1e1;
    border: 1px solid #adadad;
`

const Sections = styled.div`
    display: flex;
    flex-direction: column;
    gap: 5px;
    margin-right: 9px;
`

const SectionBox = styled.section`
    border: 1px solid #dcdcdc;
`

const SectionHead = styled.button`
    display: flex;
    align-items: center;
    justify-content: space-between;
    width: 100%;
    height: 20px;
    padding: 1px 5px 0 4px;
    background: #dfe3ff;
    border: 1px solid #a5a5ad;
    font-size: 12px;
    font-weight: 700;
`

const SectionRows = styled.div`
    display: flex;
    flex-direction: column;
    gap: 2px;
    padding-top: 13px;
`

const PropertyRow = styled.div`
    display: flex;
    height: 20px;
`

const PropertyIcon = styled.span`
    display: flex;
    flex: none;
    align-items: center;
    justify-content: center;
    width: 39px;

    svg {
        width: 17px;
        height: 17px;
    }
`

const PropertyInput = styled.input`
    flex: 1;
    min-width: 0;
    padding: 2px 2px 0;
    background: ${(p) => (p.$locked ? '#b0ceed' : '#fff')};
    border: 1px solid #a5a5ad;
    font-size: 11px;
`
